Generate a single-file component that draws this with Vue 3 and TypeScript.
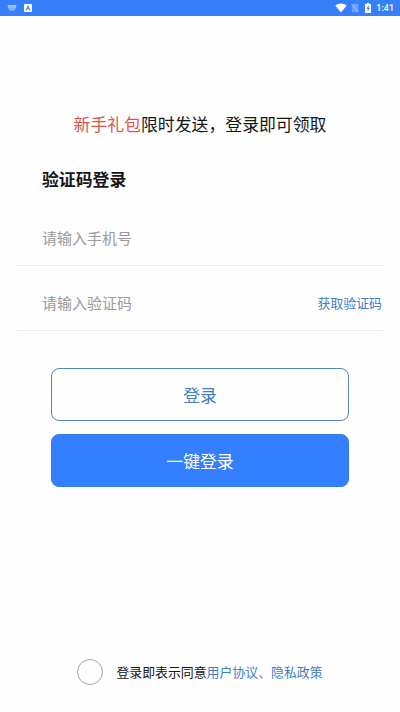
<script setup lang="ts">
import { ref } from 'vue'

const phone = ref<string>('')
const code = ref<string>('')
const agreed = ref<boolean>(false)
</script>

<template>
  <div class="screen">
    <header class="status">
      <div class="status-left">
        <svg class="keyboard" viewBox="0 0 10 8">
          <path d="M.5 1h9L8.7 4.5H1.3Z" fill="#a9cbff" />
          <path d="M1.5 2.2h7M2 3.5h6" stroke="#5e97f5" stroke-width=".5" stroke-dasharray=".8 .6" />
          <path d="M1.5 4.5h7L7.3 6.5H2.7Z" fill="#8fb8fb" />
        </svg>
        <svg class="input-mode" viewBox="0 0 8 8">
          <rect width="8" height="8" rx=".8" fill="#f4f9ff" />
          <path d="M2.2 6.3 4 1.8l1.8 4.5M2.9 4.8h2.2" fill="none" stroke="#4d6f9e" stroke-width=".9" />
        </svg>
      </div>
      <div class="status-right">
        <svg class="wifi" viewBox="0 0 12 10">
          <path d="M.3 2.5C3.6-.2 8.4-.2 11.7 2.5L6 9.6Z" fill="#fff" />
        </svg>
        <svg class="sim" viewBox="0 0 8 10">
          <path d="M2.5.8h4.7v8.4H.8V2.5Z" fill="#6ba0f8" />
          <path d="m.8 1.2 6.4 7.6" stroke="#a8c8fc" stroke-width=".8" />
        </svg>
        <svg class="battery" viewBox="0 0 6 10">
          <path d="M1.8 0h2.4v1H6v9H0V1h1.8Z" fill="#fff" />
          <path d="M3.6 2.3 1.5 5.7h1.3v2.5l2-3.5H3.6Z" fill="#3c6fc0" />
        </svg>
        <span class="time">1:41</span>
      </div>
    </header>

    <main class="content">
      <p class="promo"><span class="gift">新手礼包</span>限时发送，登录即可领取</p>
      <h1 class="title">验证码登录</h1>
      <form class="form" @submit.prevent>
        <div class="field">
          <input v-model="phone" class="input" type="tel" placeholder="请输入手机号" />
        </div>
        <div class="field">
          <input v-model="code" class="input" type="text" placeholder="请输入验证码" />
          <button class="get-code" type="button">获取验证码</button>
        </div>
        <div class="actions">
          <button class="btn outline" type="submit">登录</button>
          <button class="btn primary" type="button">一键登录</button>
        </div>
      </form>
    </main>

    <footer class="agreement">
      <button
        class="check"
        :class="{ checked: agreed }"
        type="button"
        role="checkbox"
        :aria-checked="agreed"
        @click="agreed = !agreed"
      ></button>
      <p class="terms">登录即表示同意<span class="link">用户协议、隐私政策</span></p>
    </footer>
  </div>
</template>

<style>
body {
  margin: 0;
  background: #fefefe;
}
</style>

<style scoped>
.screen {
  display: flex;
  flex-direction: column;
  box-sizing: border-box;
  width: 100%;
  height: 712px;
  overflow: hidden;
  background: #fefefe;
  color: #161616;
  font-family: "Noto Sans CJK SC", sans-serif;
}
.status {
  display: flex;
  flex: none;
  align-items: center;
  justify-content: space-between;
  height: 16px;
  box-sizing: border-box;
  padding: 0 6px 0 7px;
  background: #377ff8;
}
.status-left,
.status-right {
  display: flex;
  align-items: center;
}
.status svg {
  display: block;
}
.keyboard {
  width: 10px;
  height: 8px;
  margin-right: 7px;
}
.input-mode {
  width: 8px;
  height: 8px;
}
.wifi {
  width: 12px;
  height: 10px;
  margin-right: 4px;
}
.sim {
  width: 8px;
  height: 10px;
  margin-right: 6px;
}
.battery {
  width: 6px;
  height: 10px;
  margin-right: 5px;
}
.time {
  color: #fff;
  font: 500 9px/16px Roboto, sans-serif;
}
.content {
  flex: 1;
}
.promo {
  margin: 95px 0 0;
  text-align: center;
  font-size: 16.87px;
  line-height: 25px;
}
.gift {
  color: #dc5450;
}
.title {
  margin: 30px 0 0 42px;
  font-size: 16.87px;
  font-weight: 700;
  line-height: 25px;
}
.form {
  padding: 10px 17px 0;
}
.field {
  display: flex;
  align-items: center;
  box-sizing: border-box;
  height: 65px;
  padding: 9px 0 0 25px;
  border-bottom: 1px solid #e9e9e9;
}
.input {
  flex: 1;
  min-width: 0;
  height: 30px;
  padding: 0;
  border: 0;
  outline: none;
  background: transparent;
  color: #161616;
  font-family: inherit;
  font-size: 15px;
}
.input::placeholder {
  color: #999;
  opacity: 1;
}
.get-code {
  padding: 0;
  margin-right: 1px;
  border: 0;
  background: none;
  color: #3f7fc1;
  font-family: inherit;
  font-size: 12.9px;
}
.actions {
  display: flex;
  flex-direction: column;
  gap: 13px;
  padding: 37px 34px 0;
}
.btn {
  box-sizing: border-box;
  height: 53px;
  padding: 0;
  border-radius: 8px;
  font-family: inherit;
  font-size: 16.87px;
}
.outline {
  border: 1px solid #5488b8;
  background: #fefefe;
  color: #3f7fc1;
}
.primary {
  border: 1px solid #3279ec;
  background: #347fff;
  color: #fff;
}
.agreement {
  display: flex;
  flex: none;
  align-items: center;
  justify-content: center;
  gap: 13px;
  height: 26px;
  padding-bottom: 27px;
}
.check {
  width: 26px;
  height: 26px;
  padding: 0;
  border: 1px solid #a5a5a5;
  border-radius: 50%;
  background: #fefefe;
}
.checked {
  background: #347fff;
}
.terms {
  margin: 0;
  font-size: 12.9px;
  line-height: 20px;
}
.link {
  color: #3f7fc1;
}
</style>
